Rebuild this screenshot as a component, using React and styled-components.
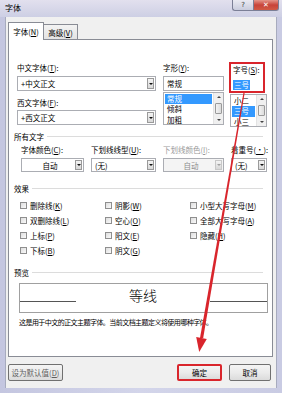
import React from 'react';
import styled, { createGlobalStyle, css } from 'styled-components';

const GlobalStyle = createGlobalStyle`
    * { box-sizing: border-box; }
    body {
        margin: 0;
        font-family: "Noto Sans CJK SC", "Noto Sans", sans-serif;
        color: #000;
    }
`;

const RED = '#d9252c';

const Window = styled.div`
    position: relative;
    width: 282px;
    height: 393px;
    background: linear-gradient(90deg, #c4c6e0, #d3d5ea 50%, #c9cbe3);
    display: flex;
    flex-direction: column;
    overflow: hidden;
`;

const TitleBar = styled.div`
    height: 17px;
    display: flex;
    align-items: flex-start;
    justify-content: space-between;
    padding-left: 5px;
    background: linear-gradient(#e2e0ee, #cdcfe4);
`;

const Title = styled.div`
    font-size: 8px;
    line-height: 15px;
`;

const Caption = styled.div`
    display: flex;
    margin-right: 3px;
`;

const CaptionButton = styled.div`
    height: 11px;
    display: flex;
    align-items: center;
    justify-content: center;
    font-family: "DejaVu Sans", sans-serif;
    font-size: 7px;
    border: 1px solid #7b7f96;
    border-top: none;
    ${(p) =>
        p.$close
            ? css`
                  width: 26px;
                  color: #fff;
                  font-weight: bold;
                  background: linear-gradient(#e4968a, #c8443a 50%, #d15a45);
                  border-radius: 0 0 3px 0;
              `
            : css`
                  width: 21px;
                  color: #333;
                  background: linear-gradient(#eaeaf2, #c9ccdd);
                  border-right: none;
                  border-radius: 0 0 0 3px;
              `}
`;

const Face = styled.div`
    height: 371px;
    margin: 0 5px;
    background: #f0f0f0;
    border-left: 1px solid #a7abbe;
    border-right: 1px solid #a7abbe;
    display: flex;
    flex-direction: column;
`;

const TabRow = styled.div`
    height: 22px;
    display: flex;
    align-items: flex-end;
    padding-left: 2px;
`;

const Tab = styled.div`
    position: relative;
    font-size: 7.5px;
    display: flex;
    align-items: center;
    justify-content: center;
    border: 1px solid #898c95;
    border-bottom: none;
    ${(p) =>
        p.$active
            ? css`
                  width: 36px;
                  height: 18px;
                  margin-bottom: -1px;
                  background: #fff;
                  z-index: 1;
              `
            : css`
                  width: 34px;
                  height: 15px;
                  border-left: none;
                  background: linear-gradient(#f3f3f3, #e3e3e3);
              `}
`;

const Panel = styled.div`
    height: 318px;
    margin: 0 3px 0 2px;
    background: #fff;
    border: 1px solid #898c95;
    padding: 23px 5px 0 5px;
    display: flex;
    flex-direction: column;
`;

const Label = styled.div`
    height: 10px;
    font-size: 7.5px;
    line-height: 10px;
    white-space: nowrap;
    color: ${(p) => (p.$disabled ? '#9a9a9a' : '#000')};
`;

const TopSection = styled.div`
    display: flex;
    align-items: flex-start;
    margin-left: 3px;
    height: 62px;
`;

const Column = styled.div`
    display: flex;
    flex-direction: column;
    width: ${(p) => p.$w}px;
    margin-left: ${(p) => p.$ml || 0}px;
`;

const ComboBox = styled.div`
    display: flex;
    align-items: center;
    height: ${(p) => p.$h || 15}px;
    margin-top: ${(p) => p.$mt || 0}px;
    border: 1px solid #abadb3;
    background: ${(p) => (p.$disabled ? '#f4f4f4' : '#fff')};
    font-size: 7.5px;
    color: ${(p) => (p.$disabled ? '#8d8d8d' : '#000')};
`;

const ComboText = styled.div`
    flex: 1;
    padding-left: 3px;
    white-space: nowrap;
    text-align: ${(p) => (p.$center ? 'center' : 'left')};
`;

const ArrowButton = styled.div`
    width: 7px;
    height: calc(100% - 2px);
    margin-right: 1px;
    display: flex;
    align-items: center;
    justify-content: center;
    border: 1px solid ${(p) => (p.$disabled ? '#c8c8c8' : '#9a9a9a')};
    background: linear-gradient(#f4f4f4, #d8d8d8);
    &::after {
        content: '';
        border-left: 2px solid transparent;
        border-right: 2px solid transparent;
        border-top: 2px solid ${(p) => (p.$disabled ? '#a0a0a0' : '#111')};
    }
`;

const Combo = ({ text, center, disabled, h, mt }) => (
    <ComboBox $disabled={disabled} $h={h} $mt={mt}>
        <ComboText $center={center}>{text}</ComboText>
        <ArrowButton $disabled={disabled} />
    </ComboBox>
);

const TextField = styled.div`
    height: 15px;
    margin-top: 3px;
    border: 1px solid #abadb3;
    font-size: 7.5px;
    line-height: 13px;
    padding-left: 3px;
`;

const ListBox = styled.div`
    height: 33px;
    margin-top: 1px;
    margin-left: ${(p) => p.$ml || 0}px;
    border: 1px solid #abadb3;
    display: flex;
`;

const ListItems = styled.div`
    flex: 1;
    display: flex;
    flex-direction: column;
    padding: 1px 1px 0 1px;
`;

const ListItem = styled.div`
    height: 10.3px;
    font-size: 7.5px;
    line-height: 10.3px;
    padding-left: 2px;
    white-space: nowrap;
    background: ${(p) => (p.$selected ? '#3399ff' : 'transparent')};
    color: ${(p) => (p.$selected ? '#fff' : '#000')};
`;

const ScrollBar = styled.div`
    width: 10px;
    display: flex;
    flex-direction: column;
    background: #f0f0f0;
    border-left: 1px solid #e3e3e3;
`;

const ScrollArrow = styled.div`
    height: 8px;
    display: flex;
    align-items: center;
    justify-content: center;
    &::after {
        content: '';
        border-left: 2px solid transparent;
        border-right: 2px solid transparent;
        ${(p) => (p.$up ? 'border-bottom: 2px solid #444;' : 'border-top: 2px solid #444;')}
    }
`;

const ScrollTrack = styled.div`
    flex: 1;
    display: flex;
    align-items: center;
    padding: 0 1px;
`;

const ScrollThumb = styled.div`
    width: 100%;
    height: 11px;
    border: 1px solid #9a9a9a;
    border-radius: 1px;
    background: linear-gradient(90deg, #f3f3f3, #dcdcdc);
`;

const List = ({ items, selected, ml }) => (
    <ListBox $ml={ml}>
        <ListItems>
            {items.map((it) => (
                <ListItem key={it} $selected={it === selected}>
                    {it}
                </ListItem>
            ))}
        </ListItems>
        <ScrollBar>
            <ScrollArrow $up />
            <ScrollTrack>
                <ScrollThumb />
            </ScrollTrack>
            <ScrollArrow />
        </ScrollBar>
    </ListBox>
);

const RedBox = styled.div`
    width: 36px;
    height: 31px;
    margin-top: -1px;
    border: 2px solid ${RED};
    padding: 1px 0 0 2px;
    display: flex;
    flex-direction: column;
`;

const Highlight = styled.span`
    display: inline-block;
    margin-top: 5px;
    padding: 0 1px;
    font-size: 7.5px;
    line-height: 10px;
    background: #3399ff;
    color: #fff;
    width: fit-content;
`;

const Heading = styled.div`
    display: flex;
    align-items: center;
    height: 10px;
    margin-top: ${(p) => p.$mt}px;
    margin-right: 4px;
    font-size: 7.5px;
    &::after {
        content: '';
        flex: 1;
        margin-left: 3px;
        border-top: 1px solid #dcdcdc;
    }
`;

const FieldRow = styled.div`
    display: grid;
    grid-template-columns: 63px 65px 61px 36px;
    column-gap: 7px;
    margin: 4px 0 0 7px;
`;

const Field = styled.div`
    display: flex;
    flex-direction: column;
`;

const EffectsGrid = styled.div`
    display: grid;
    grid-template-columns: 85px 85px 1fr;
    grid-auto-flow: column;
    grid-template-rows: repeat(4, 15px);
    margin: 5px 0 0 6px;
`;

const CheckItem = styled.div`
    display: flex;
    align-items: center;
    gap: 3px;
    font-size: 7.5px;
    white-space: nowrap;
`;

const CheckBoxMark = styled.div`
    width: 7px;
    height: 7px;
    border: 1px solid #8f8f8f;
    background: linear-gradient(135deg, #dedede, #fafafa);
`;

const PreviewBox = styled.div`
    height: 30px;
    width: 249px;
    margin: 6px 0 0 5px;
    border: 1px solid #a0a0a0;
    display: grid;
    grid-template-columns: 56px 1fr 57px;
`;

const PreviewRule = styled.div`
    height: 1px;
    margin-top: 17px;
    background: #555;
`;

const PreviewText = styled.div`
    margin-top: 3px;
    font-size: 14px;
    font-weight: 300;
    line-height: 16px;
    text-align: center;
`;

const Description = styled.div`
    margin: 4px 0 0 5px;
    font-size: 7px;
    letter-spacing: -0.55px;
    line-height: 10px;
    white-space: nowrap;
`;

const ButtonRow = styled.div`
    height: 31px;
    display: flex;
    align-items: flex-start;
    padding: 7px 5px 0 2px;
    gap: 7px;
`;

const Button = styled.div`
    width: ${(p) => p.$w}px;
    height: 17px;
    display: flex;
    align-items: center;
    justify-content: center;
    font-size: 7.5px;
    color: ${(p) => (p.$dim ? '#5f5f5f' : '#000')};
    border: ${(p) => (p.$marked ? `2px solid ${RED}` : '1px solid #707070')};
    border-radius: 2px;
    background: linear-gradient(#f4f4f4, #ebebeb 50%, #dbdbdb);
    margin-left: ${(p) => (p.$push ? 'auto' : '0')};
`;

const Overlay = styled.svg`
    position: absolute;
    left: 0;
    top: 0;
    pointer-events: none;
`;

const checks = [
    ['删除线', 'K'],
    ['双删除线', 'L'],
    ['上标', 'P'],
    ['下标', 'B'],
    ['阴影', 'W'],
    ['空心', 'O'],
    ['阳文', 'E'],
    ['阴文', 'G'],
    ['小型大写字母', 'M'],
    ['全部大写字母', 'A'],
    ['隐藏', 'H'],
];

const Key = ({ k }) => (
    <>
        (<u>{k}</u>)
    </>
);

export default function App() {
    return (
        <Window>
            <GlobalStyle />
            <TitleBar>
                <Title>字体</Title>
                <Caption>
                    <CaptionButton>?</CaptionButton>
                    <CaptionButton $close>✕</CaptionButton>
                </Caption>
            </TitleBar>
            <Face>
                <TabRow>
                    <Tab $active>
                        字体<Key k="N" />
                    </Tab>
                    <Tab>
                        高级<Key k="V" />
                    </Tab>
                </TabRow>
                <Panel>
                    <TopSection>
                        <Column $w={139}>
                            <Label>
                                中文字体<Key k="T" />:
                            </Label>
                            <Combo text="+中文正文" mt={3} />
                            <Label style={{ marginTop: 7 }}>
                                西文字体<Key k="F" />:
                            </Label>
                            <Combo text="+西文正文" mt={2} />
                        </Column>
                        <Column $w={61} $ml={7}>
                            <Label>
                                字形<Key k="Y" />:
                            </Label>
                            <TextField>常规</TextField>
                            <List items={['常规', '倾斜', '加粗']} selected="常规" />
                        </Column>
                        <Column $w={38} $ml={5}>
                            <RedBox>
                                <Label>
                                    字号<Key k="S" />:
                                </Label>
                                <Highlight>三号</Highlight>
                            </RedBox>
                            <List items={['小二', '三号', '小三']} selected="三号" ml={1} />
                        </Column>
                    </TopSection>

                    <Heading $mt={6}>所有文字</Heading>
                    <FieldRow>
                        <Field>
                            <Label>
                                字体颜色<Key k="C" />:
                            </Label>
                            <Combo text="自动" center h={14} mt={3} />
                        </Field>
                        <Field>
                            <Label>
                                下划线线型<Key k="U" />:
                            </Label>
                            <Combo text="(无)" h={14} mt={3} />
                        </Field>
                        <Field>
                            <Label $disabled>
                                下划线颜色<Key k="I" />:
                            </Label>
                            <Combo text="自动" center disabled h={14} mt={3} />
                        </Field>
                        <Field>
                            <Label>
                                着重号<Key k="·" />:
                            </Label>
                            <Combo text="(无)" h={14} mt={3} />
                        </Field>
                    </FieldRow>

                    <Heading $mt={11}>效果</Heading>
                    <EffectsGrid>
                        {checks.map(([t, k]) => (
                            <CheckItem key={t}>
                                <CheckBoxMark />
                                <span>
                                    {t}
                                    <Key k={k} />
                                </span>
                            </CheckItem>
                        ))}
                    </EffectsGrid>

                    <Heading $mt={9}>预览</Heading>
                    <PreviewBox>
                        <PreviewRule />
                        <PreviewText>等线</PreviewText>
                        <PreviewRule />
                    </PreviewBox>
                    <Description>
                        这是用于中文的正文主题字体。当前文档主题定义将使用哪种字体。
                    </Description>
                </Panel>
                <ButtonRow>
                    <Button $w={55} $dim>
                        设为默认值<Key k="D" />
                    </Button>
                    <Button $w={45} $marked $push>
                        确定
                    </Button>
                    <Button $w={42}>取消</Button>
                </ButtonRow>
            </Face>
            <Overlay width="282" height="393" viewBox="0 0 282 393">
                <polygon points="243.6,92 244.8,92 203.2,338 200,338" fill={RED} />
                <polygon points="196.2,337 206.8,339 199.2,352" fill={RED} />
            </Overlay>
        </Window>
    );
}
